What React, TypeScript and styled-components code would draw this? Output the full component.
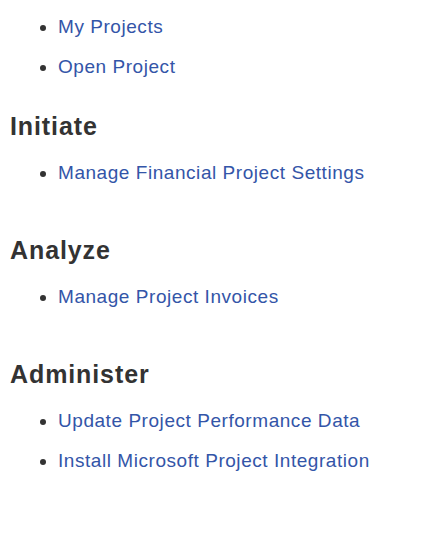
import React from "react";
import styled, { createGlobalStyle } from "styled-components";

const GlobalStyle = createGlobalStyle`
  html, body {
    margin: 0;
    padding: 0;
    background: #ffffff;
  }
  body {
    font-family: "Liberation Sans", Arial, sans-serif;
  }
`;

const Page = styled.main`
  display: flex;
  flex-direction: column;
  padding: 7px 0 0 10px;
  width: 448px;
  box-sizing: border-box;
`;

const Section = styled.section<{ $gap: number }>`
  display: flex;
  flex-direction: column;
  margin-top: ${(p) => p.$gap}px;
`;

const Heading = styled.h2`
  margin: 0 0 13px 0;
  font-size: 25px;
  line-height: 28px;
  font-weight: bold;
  letter-spacing: 0.9px;
  color: #333333;
`;

const List = styled.ul`
  list-style: none;
  margin: 0;
  padding: 0 0 0 30px;
  display: flex;
  flex-direction: column;
`;

const Item = styled.li`
  display: flex;
  align-items: center;
  height: 40px;
  line-height: 40px;
  font-size: 19px;
  &::before {
    content: "";
    width: 6px;
    height: 6px;
    border-radius: 50%;
    background: #333333;
    margin-right: 12px;
    position: relative;
    top: 1px;
  }
`;

const Link = styled.a`
  color: #3355a8;
  text-decoration: none;
  letter-spacing: 0.55px;
  cursor: pointer;
`;

const groups: { title?: string; gap: number; items: string[] }[] = [
  { gap: 0, items: ["My Projects", "Open Project"] },
  { title: "Initiate", gap: 25, items: ["Manage Financial Project Settings"] },
  { title: "Analyze", gap: 43, items: ["Manage Project Invoices"] },
  {
    title: "Administer",
    gap: 43,
    items: ["Update Project Performance Data", "Install Microsoft Project Integration"],
  },
];

export default function App() {
  return (
    <>
      <GlobalStyle />
      <Page>
        {groups.map((g, i) => (
          <Section key={i} $gap={g.gap}>
            {g.title && <Heading>{g.title}</Heading>}
            <List>
              {g.items.map((it) => (
                <Item key={it}>
                  <Link href="#">{it}</Link>
                </Item>
              ))}
            </List>
          </Section>
        ))}
      </Page>
    </>
  );
}
